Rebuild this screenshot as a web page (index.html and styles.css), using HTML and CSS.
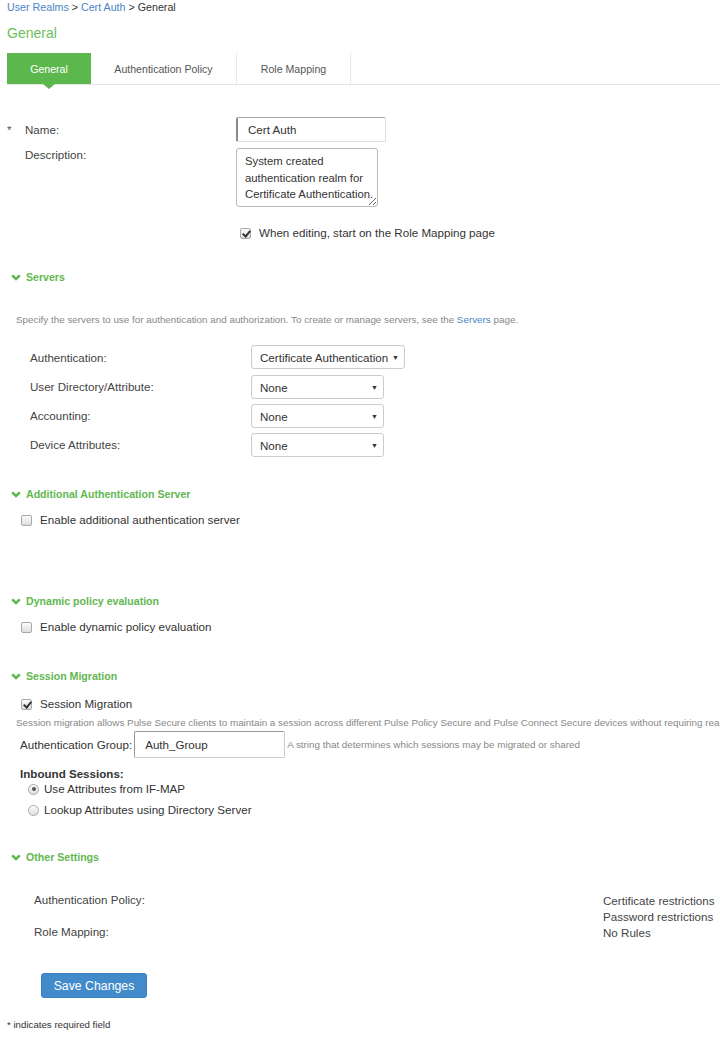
FILE: index.html
```html
<!doctype html>
<html lang="en">
    <head>
        <meta charset="UTF-8" />
        <meta name="viewport" content="width=device-width, initial-scale=1.0" />
        <title>General</title>
        <link rel="stylesheet" href="styles.css">
    </head>
    <body>
        <div class="crumbs">
            <a href="#">User Realms</a> &gt; <a href="#">Cert Auth</a> &gt; General
        </div>
        <h1 class="title">General</h1>

        <div class="tabs">
            <div class="tab tab-general active">General</div>
            <div class="tab tab-policy">Authentication Policy</div>
            <div class="tab tab-role">Role Mapping</div>
        </div>

        <div class="main-fields">
            <span class="req">*</span>
            <label class="lbl lbl-mid" for="name">Name:</label>
            <input class="text name-input" id="name" value="Cert Auth" />

            <span></span>
            <label class="lbl lbl-top" for="desc">Description:</label>
            <textarea class="desc-input" id="desc" wrap="off">System created
authentication realm for
Certificate Authentication.</textarea>

            <span></span>
            <span></span>
            <div class="check-row edit-row">
                <span class="check checked"></span>
                <span>When editing, start on the Role Mapping page</span>
            </div>
        </div>

        <!-- Servers -->
        <div class="section-head servers-head">
            <svg class="chev" width="10" height="7" viewBox="0 0 10 7"><polyline points="1.2,1.4 5,5 8.8,1.4" /></svg>
            Servers
        </div>
        <p class="hint servers-hint">
            Specify the servers to use for authentication and authorization. To create or manage servers, see the <a href="#">Servers</a> page.
        </p>
        <div class="server-grid">
            <span class="lbl">Authentication:</span>
            <div class="select select-auth"><span>Certificate Authentication</span><span class="arrow">&#9660;</span></div>
            <span class="lbl">User Directory/Attribute:</span>
            <div class="select"><span>None</span><span class="arrow">&#9660;</span></div>
            <span class="lbl">Accounting:</span>
            <div class="select"><span>None</span><span class="arrow">&#9660;</span></div>
            <span class="lbl">Device Attributes:</span>
            <div class="select"><span>None</span><span class="arrow">&#9660;</span></div>
        </div>

        <!-- Additional Authentication Server -->
        <div class="section-head additional-head">
            <svg class="chev" width="10" height="7" viewBox="0 0 10 7"><polyline points="1.2,1.4 5,5 8.8,1.4" /></svg>
            Additional Authentication Server
        </div>
        <div class="check-row section-check">
            <span class="check"></span>
            <span>Enable additional authentication server</span>
        </div>

        <!-- Dynamic policy evaluation -->
        <div class="section-head dynamic-head">
            <svg class="chev" width="10" height="7" viewBox="0 0 10 7"><polyline points="1.2,1.4 5,5 8.8,1.4" /></svg>
            Dynamic policy evaluation
        </div>
        <div class="check-row section-check">
            <span class="check"></span>
            <span>Enable dynamic policy evaluation</span>
        </div>

        <!-- Session Migration -->
        <div class="section-head session-head">
            <svg class="chev" width="10" height="7" viewBox="0 0 10 7"><polyline points="1.2,1.4 5,5 8.8,1.4" /></svg>
            Session Migration
        </div>
        <div class="check-row section-check session-check">
            <span class="check checked"></span>
            <span>Session Migration</span>
        </div>
        <div class="session-hint">
            <p class="hint">Session migration allows Pulse Secure clients to maintain a session across different Pulse Policy Secure and Pulse Connect Secure devices without requiring reauthentication.</p>
        </div>
        <div class="group-row">
            <label class="lbl" for="group">Authentication Group:</label>
            <input class="text group-input" id="group" value="Auth_Group" />
            <span class="hint">A string that determines which sessions may be migrated or shared</span>
        </div>
        <div class="inbound">Inbound Sessions:</div>
        <div class="radio-row">
            <span class="radio checked"></span>
            <span>Use Attributes from IF-MAP</span>
        </div>
        <div class="radio-row">
            <span class="radio"></span>
            <span>Lookup Attributes using Directory Server</span>
        </div>

        <!-- Other Settings -->
        <div class="section-head other-head">
            <svg class="chev" width="10" height="7" viewBox="0 0 10 7"><polyline points="1.2,1.4 5,5 8.8,1.4" /></svg>
            Other Settings
        </div>
        <div class="other-grid">
            <span class="lbl">Authentication Policy:</span>
            <span class="val">Certificate restrictions<br />Password restrictions</span>
            <span class="lbl">Role Mapping:</span>
            <span class="val">No Rules</span>
        </div>

        <button class="save">Save Changes</button>

        <p class="footnote">* indicates required field</p>
    </body>
</html>
```

FILE: styles.css
```css
body {
    margin: 0;
    font-family: "Liberation Sans", Arial, sans-serif;
    font-size: 11.6px;
    color: #333;
    background: #fff;
    overflow-x: hidden;
}
a {
    color: #4a86c5;
    text-decoration: none;
}
p {
    margin: 0;
}
.crumbs {
    padding-left: 7px;
    font-size: 10.7px;
    line-height: 14px;
    color: #333;
}
.title {
    margin: 10px 0 0 7px;
    font-size: 14px;
    line-height: 18px;
    font-weight: normal;
    color: #6cbf5c;
}

/* tabs */
.tabs {
    display: flex;
    margin: 11px 0 0 7px;
    height: 31px;
    border-bottom: 1px solid #e4e4e4;
}
.tab {
    display: flex;
    align-items: center;
    justify-content: center;
    font-size: 10.6px;
    color: #555;
    border-right: 1px solid #e8e8e8;
    box-sizing: border-box;
}
.tab-general {
    width: 84px;
}
.tab-policy {
    width: 146px;
}
.tab-role {
    width: 114px;
}
.tab.active {
    position: relative;
    background: #5cb84c;
    color: #fff;
    border-right: none;
}
.tab.active::after {
    content: "";
    position: absolute;
    top: 100%;
    left: 36px;
    border-left: 6px solid transparent;
    border-right: 6px solid transparent;
    border-top: 5px solid #5cb84c;
}

/* top fields */
.main-fields {
    display: grid;
    grid-template-columns: 18px 211px auto;
    row-gap: 6px;
    padding-left: 7px;
    margin-top: 32px;
    align-items: start;
}
.req {
    align-self: center;
    color: #555;
}
.lbl {
    color: #444;
    line-height: 14px;
}
.lbl-mid {
    align-self: center;
}
.lbl-top {
    margin-top: 0;
}
.text {
    font-family: inherit;
    font-size: 11.6px;
    color: #333;
    height: 25px;
    box-sizing: border-box;
    padding: 0 10px;
    border: 1px solid #ddd;
    border-top-color: #a9a9a9;
    border-left: 2px solid #8a8a8a;
    border-radius: 2px;
    outline: none;
}
.name-input {
    width: 150px;
}
.desc-input {
    width: 142px;
    height: 59px;
    box-sizing: border-box;
    padding: 4px 0 0 8px;
    font-family: inherit;
    font-size: 11.3px;
    line-height: 16.5px;
    color: #333;
    border: 1px solid #bbb;
    border-radius: 3px;
    overflow: hidden;
    resize: both;
}
.check-row {
    display: flex;
    align-items: center;
    gap: 8px;
    line-height: 14px;
    color: #333;
}
.edit-row {
    margin: 13px 0 0 4px;
}

/* checkboxes & radios */
.check,
.radio {
    flex: none;
    width: 11px;
    height: 11px;
    box-sizing: border-box;
    border: 1px solid #a8a8a8;
    border-radius: 2px;
    background: linear-gradient(#fbfbfb, #dedede);
    position: relative;
}
.check.checked::after {
    content: "";
    position: absolute;
    left: 3px;
    top: 0px;
    width: 3px;
    height: 6px;
    border: solid #333;
    border-width: 0 2px 2px 0;
    transform: rotate(40deg);
}
.radio {
    border-radius: 50%;
}
.radio.checked::after {
    content: "";
    position: absolute;
    left: 2.5px;
    top: 2.5px;
    width: 4px;
    height: 4px;
    border-radius: 50%;
    background: #555;
}

/* section headings */
.section-head {
    display: flex;
    align-items: center;
    gap: 5px;
    padding-left: 11px;
    font-size: 10.6px;
    font-weight: bold;
    line-height: 14px;
    color: #62b850;
}
.chev {
    fill: none;
    stroke: #5cb84c;
    stroke-width: 2.6;
}
.servers-head {
    margin-top: 30px;
}
.additional-head {
    margin-top: 30px;
}
.dynamic-head {
    margin-top: 67px;
}
.session-head {
    margin-top: 35px;
}
.other-head {
    margin-top: 33px;
}
.section-check {
    padding-left: 21px;
    margin-top: 12px;
}
.session-check {
    margin-top: 14px;
}

.hint {
    font-size: 9.85px;
    color: #888;
    line-height: 12px;
}
.servers-hint {
    padding-left: 16px;
    margin-top: 30px;
}

/* server selects */
.server-grid {
    display: grid;
    grid-template-columns: 221px auto;
    row-gap: 5px;
    align-items: center;
    padding-left: 30px;
    margin-top: 19px;
    justify-items: start;
}
.select {
    display: flex;
    align-items: center;
    justify-content: space-between;
    width: 133px;
    height: 24px;
    box-sizing: border-box;
    padding: 0 5px 0 8px;
    border: 1px solid #ccc;
    border-radius: 3px;
    color: #333;
}
.select-auth {
    width: 154px;
    margin-bottom: 1px;
}
.arrow {
    font-size: 7px;
    color: #333;
}

/* session migration */
.session-hint {
    padding-left: 16px;
    margin-top: 6px;
    white-space: nowrap;
    overflow: hidden;
}
.group-row {
    display: flex;
    align-items: center;
    padding-left: 20px;
    margin-top: 2px;
}
.group-row .lbl {
    color: #333;
    margin-right: 2px;
}
.group-input {
    width: 151px;
    height: 27px;
    border-left-width: 1px;
    border-color: #ccc;
    border-left-color: #999;
    border-top-color: #999;
    padding-left: 10px;
}
.group-row .hint {
    margin-left: 2px;
}
.inbound {
    padding-left: 20px;
    margin-top: 9px;
    font-weight: bold;
    line-height: 14px;
    color: #333;
}
.radio-row {
    display: flex;
    align-items: center;
    gap: 5px;
    padding-left: 28px;
    line-height: 14px;
    margin-top: 1px;
}
.radio-row + .radio-row {
    margin-top: 7px;
}

/* other settings */
.other-grid {
    display: grid;
    grid-template-columns: 569px auto;
    padding-left: 34px;
    margin-top: 29px;
    line-height: 16px;
    color: #444;
}
.other-grid .val {
    color: #444;
}

.save {
    display: block;
    margin: 32px 0 0 41px;
    width: 106px;
    height: 25px;
    padding: 0;
    border: 1px solid #3a80c0;
    border-radius: 3px;
    background: #428bca;
    color: #fff;
    font-family: inherit;
    font-size: 12.3px;
    cursor: pointer;
}
.footnote {
    margin: 21px 0 0 7px;
    font-size: 9.7px;
    line-height: 12px;
    color: #333;
}
```
